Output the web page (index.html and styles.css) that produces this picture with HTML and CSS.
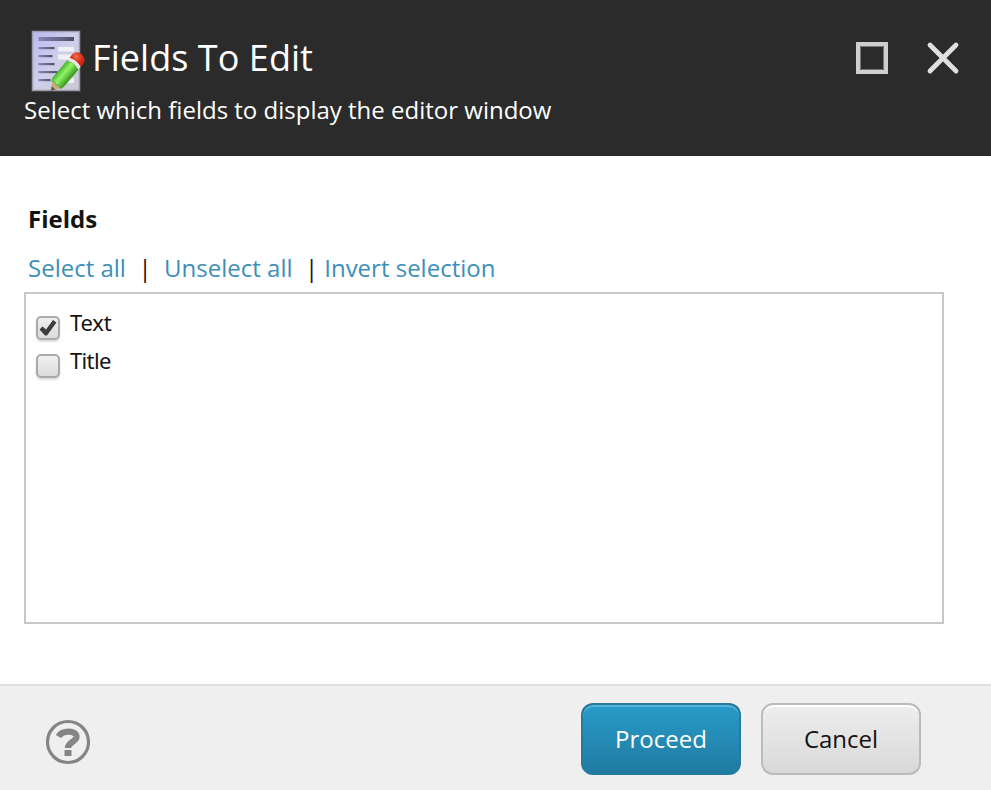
FILE: index.html
```html
<!DOCTYPE html>
<html lang="en">
<head>
<meta charset="utf-8">
<title>Fields To Edit</title>
<link rel="stylesheet" href="styles.css">
</head>
<body>
<header class="header">
  <div class="heading">
    <svg class="doc-icon" width="56" height="64" viewBox="0 0 56 64">
      <defs>
        <linearGradient id="paper" x1="0" y1="0" x2="1" y2="1"><stop offset="0" stop-color="#b9b8f2"/><stop offset=".5" stop-color="#d0cfea"/><stop offset="1" stop-color="#c8c8d4"/></linearGradient>
        <linearGradient id="ink"><stop offset="0" stop-color="#8586b0"/><stop offset="1" stop-color="#50506a"/></linearGradient>
        <linearGradient id="pencil" x1="0" y1="0" x2="0" y2="1"><stop offset="0" stop-color="#4fbb2c"/><stop offset=".4" stop-color="#91f468"/><stop offset="1" stop-color="#37981b"/></linearGradient>
        <radialGradient id="eraser" cx=".5" cy=".3"><stop offset="0" stop-color="#f87050"/><stop offset="1" stop-color="#cf2615"/></radialGradient>
      </defs>
      <rect x="1.500" y="1.500" width="47" height="59" fill="url(#paper)" stroke="#9b9baa" stroke-width="1.500"/>
      <g fill="url(#ink)"><rect x="7.500" y="7" width="35.500" height="4"/><rect x="7.500" y="17" width="16" height="2.200"/><rect x="7.500" y="25" width="14" height="2.200"/><rect x="7.500" y="33" width="16" height="2.200"/><rect x="7.500" y="41" width="19" height="2.200"/><rect x="7.500" y="49" width="12" height="2.200"/></g>
      <path fill="#f0f0f5" d="M27 17h16v4.500H27zM27 24.500h16v5H27zM34 48h9v5h-9z"/>
      <g transform="translate(20 61) rotate(-50)">
        <path fill="#c9b083" d="M0 0L9-6v12z"/><path fill="#65543f" d="M0 0l4-2.500v5z"/>
        <path fill="url(#pencil)" stroke="#399d21" stroke-width=".6" d="M8-5.500q2-1.500 4-1.500h22q3 7 0 14H12q-2 0-4-1.500 2-2.500 0-5.500 2-3 0-5.500z"/>
        <path fill="#e8e6e6" d="M34-7h4q3 7 0 14h-4q3-7 0-14z"/>
        <path fill="url(#eraser)" d="M37.500-7q10-1.500 10.500 7-.5 8.500-10.500 7 3-7 0-14z"/>
      </g>
    </svg>
    <h1 class="title">Fields To Edit</h1>
    <div class="window-controls">
      <svg width="32" height="32" viewBox="0 0 32 32"><path fill="none" stroke="#777" stroke-width="1" d="M4.500 4.500h23v23h-23z"/><path fill="none" stroke="#cfcfcf" stroke-width="4" d="M2 2h28v28H2z"/></svg>
      <svg width="34" height="34" viewBox="0 0 34 34"><path fill="none" stroke="#dfdfdf" stroke-width="4.800" stroke-linecap="round" d="M4 4l26 26M30 4L4 30"/></svg>
    </div>
  </div>
  <p class="subtitle">Select which fields to display the editor window</p>
</header>
<main class="content">
  <h2 class="label">Fields</h2>
  <nav class="links"><a>Select all</a><span class="bar">|</span><a class="unselect">Unselect all</a><span class="bar">|</span><a class="invert">Invert selection</a></nav>
  <div class="list">
    <label class="row"><span class="check"><svg width="20" height="20" viewBox="0 0 20 20"><path fill="#3d3d3d" d="M1.500 11.500l3-3 3.500 3 7-9.500 3.500 2.500L9 17.500H7z"/></svg></span><span class="option">Text</span></label>
    <label class="row"><span class="check"></span><span class="option narrow">Title</span></label>
  </div>
</main>
<footer class="footer">
  <svg class="help" width="46" height="46" viewBox="0 0 46 46"><circle cx="23" cy="23" r="20.500" fill="none" stroke="#858585" stroke-width="3.200"/><path fill="none" stroke="#858585" stroke-width="6.200" d="M13.500 17.500c4-6.500 18.500-6.500 18 .5C31 23 23 23 23 29"/><path fill="#858585" d="M19.500 31h7v6h-7z"/></svg>
  <button class="btn primary">Proceed</button>
  <button class="btn">Cancel</button>
</footer>
</body>
</html>
```
FILE: styles.css
```css
* { box-sizing: border-box; }
body { margin: 0; height: 790px; display: flex; flex-direction: column; background: #fff; color: #131313; font: 24px/32px "Open Sans", sans-serif; overflow: hidden; }
h1, h2, p { margin: 0; }
svg { display: block; flex: none; }
.header { height: 156px; background: #2b2b2b; color: #fff; padding: 29px 31px 0 24px; }
.heading { display: flex; height: 65px; padding-left: 7px; }
.doc-icon { margin-top: 1px; }
.title { font-size: 36px; line-height: 58px; font-weight: 400; letter-spacing: 0.05px; margin-left: 5px; white-space: nowrap; }
.window-controls { margin-left: auto; display: flex; align-items: center; gap: 38px; height: 58px; }
.subtitle { white-space: nowrap; }
.content { flex: 1; padding: 47px 47px 0 24px; }
.label { font-size: 24px; line-height: 32px; font-weight: 700; padding-left: 4px; }
.links { display: flex; padding-left: 4px; margin: 17px 0 8px; white-space: nowrap; }
.links a { color: #3d8fb8; }
.bar { margin-left: 12.500px; }
.unselect { margin-left: 12.500px; }
.invert { margin-left: 6px; }
.list { height: 332px; border: 2px solid #c8c8c8; padding: 14px 10px; }
.row { display: flex; height: 38px; gap: 10px; }
.check { width: 24px; height: 24px; margin-top: 8px; border: 2px solid #aaa; border-radius: 5px; background: linear-gradient(#f0f0f0, #dcdcdc); box-shadow: 0 2px 2px #ddd; }
.option { font-family: "Noto Sans", sans-serif; font-size: 22px; line-height: 28px; letter-spacing: -0.2px; }
.narrow { letter-spacing: -0.65px; }
.footer { height: 106px; background: #efefef; border-top: 2px solid #e0e0e0; display: flex; padding: 17px 70px 0 45px; gap: 20px; }
.help { margin: 16px auto 0 0; }
.btn { width: 160px; height: 72px; padding: 0; border: 2px solid #bbb; border-radius: 12px; background: linear-gradient(#eee, #d8d8d8); box-shadow: inset 0 2px 0 #fff; color: #131313; font: 24px/32px "Open Sans", sans-serif; }
.primary { border-color: #28799b #28799b #207b9f; background: linear-gradient(#289bc9, #207ba1); box-shadow: inset 0 2px 0 #55b4da; color: #fff; }
```
